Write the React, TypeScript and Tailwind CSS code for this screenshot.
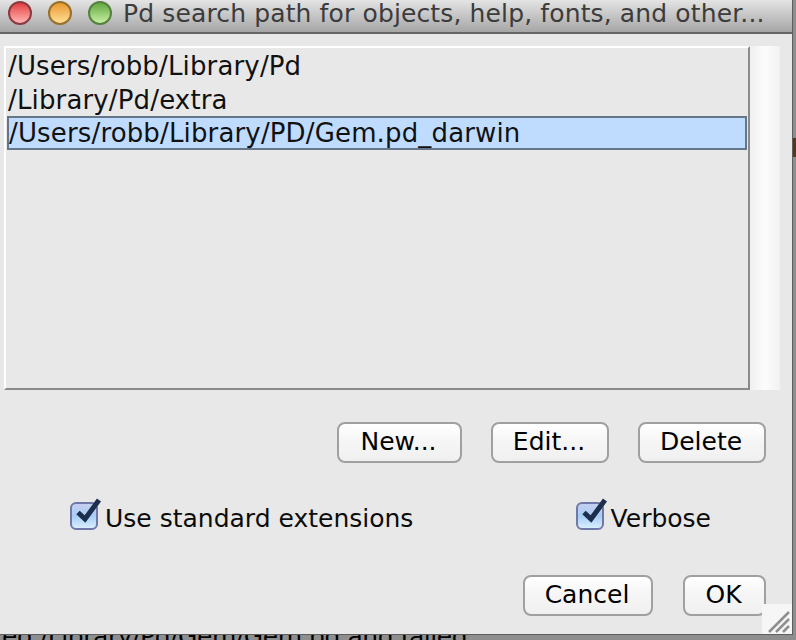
import React from "react";

const font = { fontFamily: '"DejaVu Sans", sans-serif' };

const paths = ["/Users/robb/Library/Pd", "/Library/Pd/extra", "/Users/robb/Library/PD/Gem.pd_darwin"];

const Light = ({ className }: { className: string }) => (
  <div className={`w-[24px] h-[24px] rounded-full border-2 ${className}`} />
);

const Button = ({ label, width }: { label: string; width: string }) => (
  <button
    className={`${width} h-[41px] rounded-[8px] border-2 border-[#a0a0a0] bg-gradient-to-b from-white via-[#f5f5f5] to-[#f0f0f0] text-[25px] leading-none text-black pb-[3px] pr-[2px]`}
  >
    {label}
  </button>
);

const Check = ({ label }: { label: string }) => (
  <label className="flex items-start gap-[7px] text-[25px] leading-none text-[#0c0c0c]">
    <span className="relative block w-[28px] h-[28px] rounded-[6px] border-2 border-[#7078a8] bg-gradient-to-b from-[#c4cff0] via-[#a8cdf5] to-[#d8eefe]">
      <svg className="absolute left-[2px] top-[-6px]" width="28" height="28" viewBox="0 0 28 28">
        <path d="M4 14.5 L11 21 L25 2" fill="none" stroke="#1c2f4d" strokeWidth="5" />
      </svg>
    </span>
    <span className="mt-[4px]">{label}</span>
  </label>
);

export default function App() {
  return (
    <div style={font} className="relative w-[796px] h-[640px] overflow-hidden bg-[#8e8e8e]">
      {/* text of the window behind, cut off by the frame */}
      <div className="absolute left-[2px] top-[624px] text-[25px] tracking-[-0.45px] leading-none text-black whitespace-nowrap">
        ed /Library/Pd/Gem/Gem.pd and failed
      </div>
      <div className="absolute left-[793px] top-[138px] w-[3px] h-[19px] bg-[#5c3416]" />

      <div className="relative w-[793px] h-[635px] bg-[#e8e8e8] flex flex-col border-r border-b border-[#5e5e5e]">
        <div className="h-[34px] shrink-0 flex items-start pl-[8px] gap-[16px] bg-gradient-to-b from-[#e4e4e4] to-[#a6a6a6] border-b-2 border-[#666]">
          <Light className="mt-[1px] border-[#8a3a42] bg-gradient-to-b from-[#e0383f] to-[#ffb4b4]" />
          <Light className="mt-[1px] border-[#96702c] bg-gradient-to-b from-[#e8982a] to-[#ffdf92]" />
          <Light className="mt-[1px] border-[#56803e] bg-gradient-to-b from-[#62a83e] to-[#c8f0a4]" />
          <span className="text-[25px] tracking-[0.13px] leading-none text-[#3c3c3c] ml-[-5px] mt-[1px] whitespace-nowrap">
            Pd search path for objects, help, fonts, and other...
          </span>
        </div>

        <div className="flex mt-[12px] ml-[4px] h-[344px]">
          <div className="w-[746px] border-2 border-t-white border-l-white border-r-[#8a8a8a] border-b-[#8a8a8a] pl-[1px]">
            {paths.map((p, i) => (
              <div
                key={p}
                className={`h-[34px] flex items-center text-[26px] tracking-[0.15px] leading-none text-[#111] whitespace-nowrap ${
                  i === 2 ? "bg-[#bfdcff] border-2 border-[#66768a] mr-[1px]" : "pl-[1px] pt-[1px]"
                }`}
              >
                {p}
              </div>
            ))}
          </div>
          <div className="w-[30px] bg-gradient-to-r from-[#f0f0f0] via-[#fcfcfc] to-[#f2f2f2]" />
        </div>

        <div className="flex justify-end gap-[29px] mt-[32px] pr-[26px]">
          <Button label="New..." width="w-[125px]" />
          <Button label="Edit..." width="w-[118px]" />
          <Button label="Delete" width="w-[128px]" />
        </div>

        <div className="flex justify-between mt-[39px] pl-[70px] pr-[81px]">
          <Check label="Use standard extensions" />
          <Check label="Verbose" />
        </div>

        <div className="flex justify-end gap-[30px] mt-[44px] pr-[26px]">
          <Button label="Cancel" width="w-[130px]" />
          <Button label="OK" width="w-[83px]" />
        </div>
      </div>

      {/* resize grip */}
      <svg className="absolute left-[762px] top-[604px]" width="30" height="30" viewBox="0 0 30 30">
        <rect width="30" height="30" fill="#f6f6f6" />
        <path d="M7 28 L27 8 M14 28 L27 15 M21 28 L27 22" stroke="#8f8f8f" strokeWidth="2.5" />
      </svg>
    </div>
  );
}
